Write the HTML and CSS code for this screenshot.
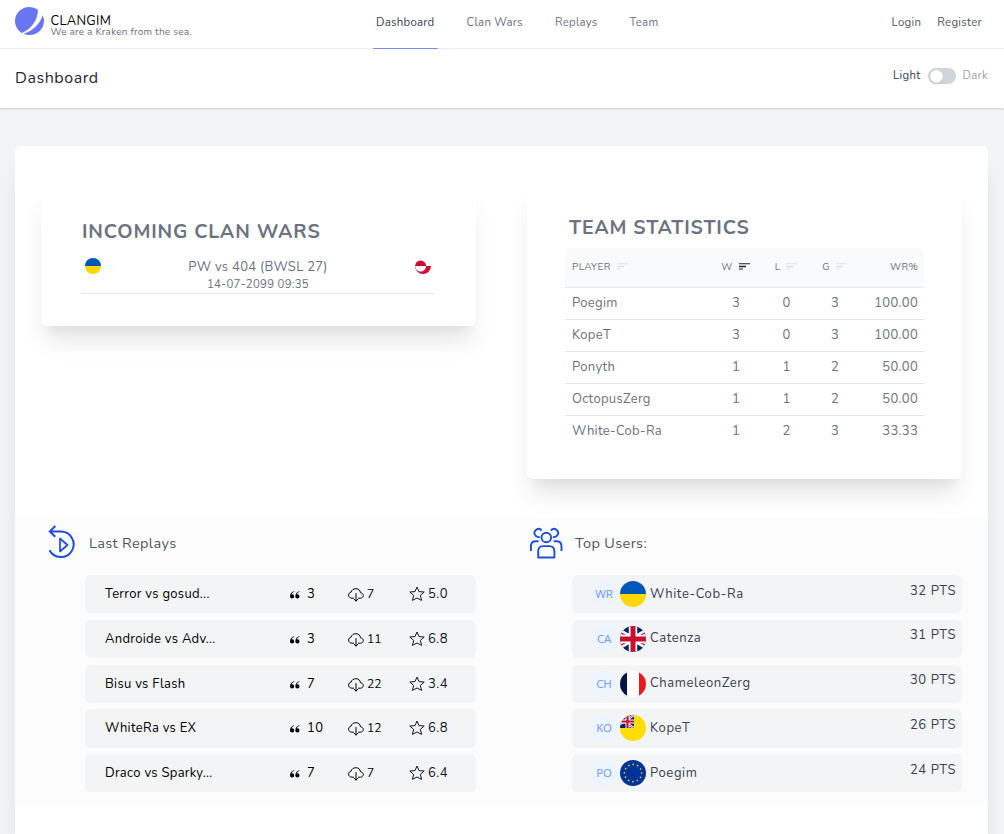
FILE: index.html
```
<!DOCTYPE html>
<html lang="en">
<head>
<meta charset="utf-8">
<title>Clangim - Dashboard</title>
<link rel="stylesheet" href="styles.css">
</head>
<body>
<svg class="defs" width="0" height="0">
  <defs>
    <clipPath id="round"><circle cx="13" cy="13" r="13"/></clipPath>
    <symbol id="ua" viewBox="0 0 26 26"><g clip-path="url(#round)"><path fill="#0057b8" d="M0 0h26v13H0z"/><path fill="#ffd700" d="M0 13h26v13H0z"/></g></symbol>
    <symbol id="gl" viewBox="0 0 26 26"><g clip-path="url(#round)"><path fill="#fff" d="M0 0h26v13H0z"/><path fill="#d00c33" d="M0 13h26v13H0z"/><path fill="#d00c33" d="M0 13a9 9 0 0 1 18 0z"/><path fill="#fff" d="M0 13a9 9 0 0 0 18 0z"/></g></symbol>
    <symbol id="gb" viewBox="0 0 26 26"><g clip-path="url(#round)"><path fill="#012169" d="M0 0h26v26H0z"/><path stroke="#fff" stroke-width="5" d="M-4 3l34 20M30 3L-4 23"/><path stroke="#c8102e" stroke-width="1.6" d="M-4 4l16 9.400M30 22L14 12.600M30 4L14 13.400M-4 22l16-9.400"/><path stroke="#fff" stroke-width="8.5" d="M13 0v26M0 13h26"/><path stroke="#c8102e" stroke-width="5" d="M13 0v26M0 13h26"/></g></symbol>
    <symbol id="fr" viewBox="0 0 26 26"><g clip-path="url(#round)"><path fill="#fff" d="M0 0h26v26H0z"/><path fill="#051440" d="M0 0h7v26H0z"/><path fill="#ec1920" d="M19 0h7v26h-7z"/></g></symbol>
    <symbol id="nu" viewBox="0 0 26 26"><g clip-path="url(#round)"><path fill="#fedd00" d="M0 0h26v26H0z"/><path fill="#012169" d="M0 0h14v13H0z"/><path stroke="#fff" stroke-width="2.400" d="M-6 0l20 13M14 0L-6 13"/><path stroke="#c8102e" stroke-width=".8" d="M-6 0l20 13M14 0L-6 13"/><path stroke="#fff" stroke-width="4" d="M7.500 0v13M0 6.500h14"/><path stroke="#c8102e" stroke-width="2.200" d="M7.500 0v13M0 6.500h14"/></g></symbol>
    <symbol id="eu" viewBox="0 0 26 26"><circle cx="13" cy="13" r="13" fill="#039"/><circle cx="13" cy="13" r="8.6" fill="none" stroke="#e8cf1c" stroke-width="1.7" stroke-linecap="round" stroke-dasharray="0 4.503"/></symbol>
    <symbol id="sort" viewBox="0 0 11 7"><path fill="currentColor" d="M0 .2h11v1H0zM0 2.8h7v1.4H0zM0 5.6h4v1H0z"/></symbol>
    <symbol id="quote" viewBox="0 0 10 8"><path fill="currentColor" d="M4.1.3C2.4.7 0 2.4 0 5.400a2.100 2.100 0 1 0 2.100-2.100q-.3 0-.6.1C1.900 2.100 2.900 1.200 4.300.7zM9.400.3C7.700.7 5.300 2.400 5.300 5.400a2.100 2.100 0 1 0 2.100-2.100q-.3 0-.6.1C7.200 2.100 8.200 1.200 9.600.7z"/></symbol>
    <symbol id="cloud" viewBox="0 0 16 16"><path fill="none" stroke="currentColor" stroke-linecap="round" stroke-linejoin="round" d="M5.500 11.200H4C1.900 11.100.6 9.800.6 8.200c0-1.700 1.100-2.800 2.500-3C3.500 3 5.500 1.700 7.900 1.700c2.500 0 4.400 1.500 4.500 4 1.600.3 2.900 1.200 2.900 2.800 0 1.500-1.200 2.700-3 2.700H10.500M8 6.500v7.500M6.200 12.300L8 14.100l1.800-1.800"/></symbol>
    <symbol id="star" viewBox="0 0 16 16"><path fill="none" stroke="currentColor" stroke-linejoin="round" d="M8 1l2 4.600 5.200.4-3.900 3.400 1.300 5L8 12l-4.600 2.400 1.300-5L.8 6 6 5.600z"/></symbol>
  </defs>
</svg>

<nav class="nav">
  <a class="brand">
    <svg class="logo" viewBox="0 0 48 48" preserveAspectRatio="none"><path fill="#6875f5" d="M11.395 44.428C4.557 40.198 0 32.632 0 24 0 10.745 10.745 0 24 0a23.891 23.891 0 0 1 13.997 4.502c-.2 17.907-11.097 33.245-26.602 39.926z"/><path fill="#6875f5" d="M14.134 45.885A23.914 23.914 0 0 0 24 48c13.255 0 24-10.745 24-24 0-3.516-.756-6.856-2.115-9.866-4.659 15.143-16.608 27.092-31.750 31.751z"/></svg>
    <span class="brand-text"><span class="brand-name">CLANGIM</span><span class="tagline">We are a Kraken from the sea.</span></span>
  </a>
  <div class="links">
    <a class="link active">Dashboard</a><a class="link">Clan Wars</a><a class="link">Replays</a><a class="link">Team</a>
  </div>
  <div class="auth"><a>Login</a><a>Register</a></div>
</nav>

<header class="page-header">
  <h1>Dashboard</h1>
  <div class="theme"><span>Light</span><span class="toggle"><i></i></span><span class="dark">Dark</span></div>
</header>

<main class="panel">
  <section class="top">
    <div class="card wars">
      <h2 class="wars-title">INCOMING CLAN WARS</h2>
      <div class="war">
        <svg class="mini"><use href="#ua"/></svg>
        <div class="war-info"><div class="war-name">PW vs 404 (BWSL 27)</div><div class="war-date">14-07-2099 09:35</div></div>
        <svg class="mini"><use href="#gl"/></svg>
      </div>
    </div>
    <div class="card stats">
      <h2 class="stats-title">TEAM STATISTICS</h2>
      <table>
        <colgroup><col class="c1"><col class="c2"><col class="c3"><col class="c4"><col></colgroup>
        <thead><tr>
          <th class="player">PLAYER<svg class="sort"><use href="#sort"/></svg></th>
          <th>W<svg class="sort on"><use href="#sort"/></svg></th>
          <th>L<svg class="sort"><use href="#sort"/></svg></th>
          <th>G<svg class="sort"><use href="#sort"/></svg></th>
          <th class="rate">WR%</th></tr></thead>
        <tbody>
          <tr><td class="player">Poegim</td><td>3</td><td>0</td><td>3</td><td class="rate">100.00</td></tr>
          <tr><td class="player">KopeT</td><td>3</td><td>0</td><td>3</td><td class="rate">100.00</td></tr>
          <tr><td class="player">Ponyth</td><td>1</td><td>1</td><td>2</td><td class="rate">50.00</td></tr>
          <tr><td class="player">OctopusZerg</td><td>1</td><td>1</td><td>2</td><td class="rate">50.00</td></tr>
          <tr><td class="player">White-Cob-Ra</td><td>1</td><td>2</td><td>3</td><td class="rate">33.33</td></tr>
        </tbody>
      </table>
    </div>
  </section>

  <section class="bottom">
    <div class="col">
      <div class="head">
        <svg class="head-icon replay-icon" viewBox="0 0 34 36" fill="none" stroke="#1d4ed8" stroke-width="2"><path d="M3 7.500H14.500A12.800 12.800 0 1 1 2.500 26.300M8.300 2L2.800 7.500l5.500 5.200"/><path stroke-width="1.700" stroke-linejoin="round" d="M13 14.500v13l7.500-6.500z"/></svg>
        <h3>Last Replays</h3>
      </div>
      <div class="list">
        <div class="item replay"><span>Terror vs gosud...</span><span class="n"><svg class="q"><use href="#quote"/></svg>3</span><span class="d"><svg><use href="#cloud"/></svg>7</span><span class="s"><svg><use href="#star"/></svg>5.0</span></div>
        <div class="item replay"><span>Androide vs Adv...</span><span class="n"><svg class="q"><use href="#quote"/></svg>3</span><span class="d"><svg><use href="#cloud"/></svg>11</span><span class="s"><svg><use href="#star"/></svg>6.8</span></div>
        <div class="item replay"><span>Bisu vs Flash</span><span class="n"><svg class="q"><use href="#quote"/></svg>7</span><span class="d"><svg><use href="#cloud"/></svg>22</span><span class="s"><svg><use href="#star"/></svg>3.4</span></div>
        <div class="item replay"><span>WhiteRa vs EX</span><span class="n"><svg class="q"><use href="#quote"/></svg>10</span><span class="d"><svg><use href="#cloud"/></svg>12</span><span class="s"><svg><use href="#star"/></svg>6.8</span></div>
        <div class="item replay"><span>Draco vs Sparky...</span><span class="n"><svg class="q"><use href="#quote"/></svg>7</span><span class="d"><svg><use href="#cloud"/></svg>7</span><span class="s"><svg><use href="#star"/></svg>6.4</span></div>
      </div>
    </div>
    <div class="col users">
      <div class="head">
        <svg class="head-icon" viewBox="1 1 34 36" fill="none" stroke="#1d4ed8" stroke-width="1.900"><circle cx="17.300" cy="14.500" r="4.800"/><path stroke-linejoin="round" d="M9.200 34.500v-6c0-3.600 2.200-5.400 5-5.400h6.200c2.800 0 5 1.800 5 5.400v6z"/><path d="M10.800 13.800A4 4 0 1 1 12.700 7.600M23.800 13.800A4 4 0 1 0 21.900 7.600M1.900 28v-4.500c0-3.600 2.100-5.300 4.700-5.300h3M32.500 28v-4.500c0-3.600-2.100-5.300-4.700-5.300h-3"/></svg>
        <h3>Top Users:</h3>
      </div>
      <div class="list">
        <div class="item user"><span class="avatar">WR</span><svg class="flag"><use href="#ua"/></svg><span class="name">White-Cob-Ra</span><span class="pts">32 PTS</span></div>
        <div class="item user"><span class="avatar">CA</span><svg class="flag"><use href="#gb"/></svg><span class="name">Catenza</span><span class="pts">31 PTS</span></div>
        <div class="item user"><span class="avatar">CH</span><svg class="flag"><use href="#fr"/></svg><span class="name">ChameleonZerg</span><span class="pts">30 PTS</span></div>
        <div class="item user"><span class="avatar">KO</span><svg class="flag"><use href="#nu"/></svg><span class="name">KopeT</span><span class="pts">26 PTS</span></div>
        <div class="item user"><span class="avatar">PO</span><svg class="flag"><use href="#eu"/></svg><span class="name">Poegim</span><span class="pts">24 PTS</span></div>
      </div>
    </div>
  </section>
</main>
</body>
</html>
```
FILE: styles.css
```
* { box-sizing: border-box; }
body { margin: 0; height: 834px; overflow: hidden; background: #f3f4f6; color: #6b7280; font-family: Nunito, Lato, "Noto Sans", sans-serif; font-size: 13px; line-height: 20px; letter-spacing: .3px; }
h1, h2, h3 { margin: 0; font-weight: 400; }
svg { display: block; flex: none; }
.defs { position: absolute; }

.nav { height: 49px; background: #fff; border-bottom: 1px solid #f0f1f3; display: grid; grid-template-columns: 373px 1fr auto; }
.brand { display: flex; padding: 7px 0 0 15px; }
.logo { width: 29px; height: 28px; margin-right: 6.500px; }
.brand-text { display: flex; flex-direction: column; padding-top: 8px; }
.brand-name { color: #000; font-size: 13px; line-height: 12px; letter-spacing: .3px; }
.tagline { font-size: 10px; line-height: 10px; letter-spacing: .22px; }
.links { display: flex; gap: 26px; }
.link { height: 49px; padding: 12px 3px 0; font-size: 11.400px; white-space: nowrap; letter-spacing: .27px; }
.active { color: #374151; border-bottom: 1px solid #7f8cf8; }
.auth { display: flex; gap: 16px; padding: 12px 22px 0 0; font-size: 11.400px; color: #4b5563; }

.page-header { height: 59px; background: #fff; box-shadow: 0 1px 2px rgba(0,0,0,.16); display: flex; justify-content: space-between; padding: 18px 16px 0 15px; }
h1 { padding-top: 1px; color: #1f2937; font-size: 16px; letter-spacing: .55px; }
.theme { display: flex; gap: 7px; font-size: 11.400px; line-height: 17px; color: #374151; }
.toggle { width: 28px; height: 16px; border-radius: 8px; background: #d1d5db; margin-top: 1px; padding: 2px; }
.toggle i { display: block; width: 13px; height: 13px; border-radius: 50%; background: #fff; box-shadow: 0 1px 2px rgba(0,0,0,.15); }
.dark { color: #9ca3af; }

.panel { margin: 38px 16px 0 15px; height: 688px; background: #fff; border-radius: 6px 6px 0 0; box-shadow: 0 20px 25px -5px rgba(0,0,0,.1), 0 10px 10px -5px rgba(0,0,0,.04); }
.top { height: 372px; display: grid; grid-template-columns: 1fr 1fr; align-items: start; gap: 51px; padding: 38px 26px 0; }
.card { background: #fff; border-radius: 6px; box-shadow: 0 20px 25px -5px rgba(0,0,0,.1), 0 10px 10px -5px rgba(0,0,0,.04); }
.wars { height: 142px; padding: 35px 42px 0 40px; }
.stats { height: 295px; padding: 31px 38px 0; }
h2 { font-size: 19.500px; line-height: 26px; font-weight: 700; white-space: nowrap; letter-spacing: .82px; }
.wars-title { padding-left: 1px; }
.stats-title { padding-left: 4px; }
.war { display: flex; justify-content: space-between; height: 49px; padding: 13px 3px 0 4px; border-bottom: 1px solid #e5e7eb; }
.mini { width: 16px; height: 16px; }
.war-info { text-align: center; line-height: 18px; }
.war-date { font-size: 11.400px; line-height: 17px; }

table { width: 359px; margin-top: 7px; border-collapse: separate; border-spacing: 0; table-layout: fixed; }
.c1 { width: 145px; } .c2 { width: 51px; } .c3 { width: 50px; } .c4 { width: 47px; }
th { height: 40px; padding: 0 0 2px; background: #f9fafb; font-weight: 400; font-size: 10px; white-space: nowrap; border-bottom: 1px solid #e5e7eb; }
th:first-child { border-top-left-radius: 6px; }
th:last-child { border-top-right-radius: 6px; }
td { height: 32px; padding: 0 0 2px 1px; text-align: center; border-bottom: 1px solid #e5e7eb; }
tr:last-child td { border-bottom: 0; }
th.player, td.player { text-align: left; padding-left: 7px; }
th.rate, td.rate { text-align: right; padding-right: 6px; }
.sort { display: inline-block; width: 11px; height: 7px; margin-left: 6px; color: #dfe1e4; }
.sort.on { color: #222; }

.bottom { height: 287px; background: #fcfcfc; display: grid; grid-template-columns: 1fr 1fr; gap: 51px; padding: 6px 26px 0; }
.head { display: flex; height: 51px; padding-left: 3px; }
.head-icon { width: 34px; height: 36px; }
.replay-icon { margin-left: 3px; margin-right: -3px; }
h3 { padding: 9px 0 0 11px; font-size: 14.500px; color: #4b5563; letter-spacing: .36px; }
.list { display: flex; flex-direction: column; gap: 6.500px; padding-left: 44px; }
.users .list { padding-left: 44.500px; }
.item { height: 38.250px; border-radius: 6px; background: #f3f4f6; }
.replay { display: grid; grid-template-columns: 185px 58px 61px 1fr; align-items: center; padding-left: 20px; color: #000; white-space: nowrap; }
.replay span { display: flex; align-items: center; }
.replay .n { gap: 7px; letter-spacing: .5px; }
.q { width: 10px; height: 8px; margin-top: 2px; }
.d svg, .s svg { width: 16px; height: 16px; margin-right: 3px; }
.d svg { margin-top: 2px; }
.replay .d { font-size: 12px; letter-spacing: .1px; }
.s { color: #111827; letter-spacing: .5px; }
.user { display: flex; align-items: center; padding: 0 6px 0 19.500px; color: #374151; letter-spacing: .6px; }
.avatar { width: 26px; height: 26px; border-radius: 50%; background: #ebf4ff; color: #7f9cf5; font: 11.500px/26px "Noto Sans", sans-serif; letter-spacing: -.2px; text-align: center; }
.flag { width: 26px; height: 26px; margin: 0 4px 0 3px; }
.name { flex: 1; padding-bottom: 1px; }
.pts { padding-bottom: 7px; }
```
